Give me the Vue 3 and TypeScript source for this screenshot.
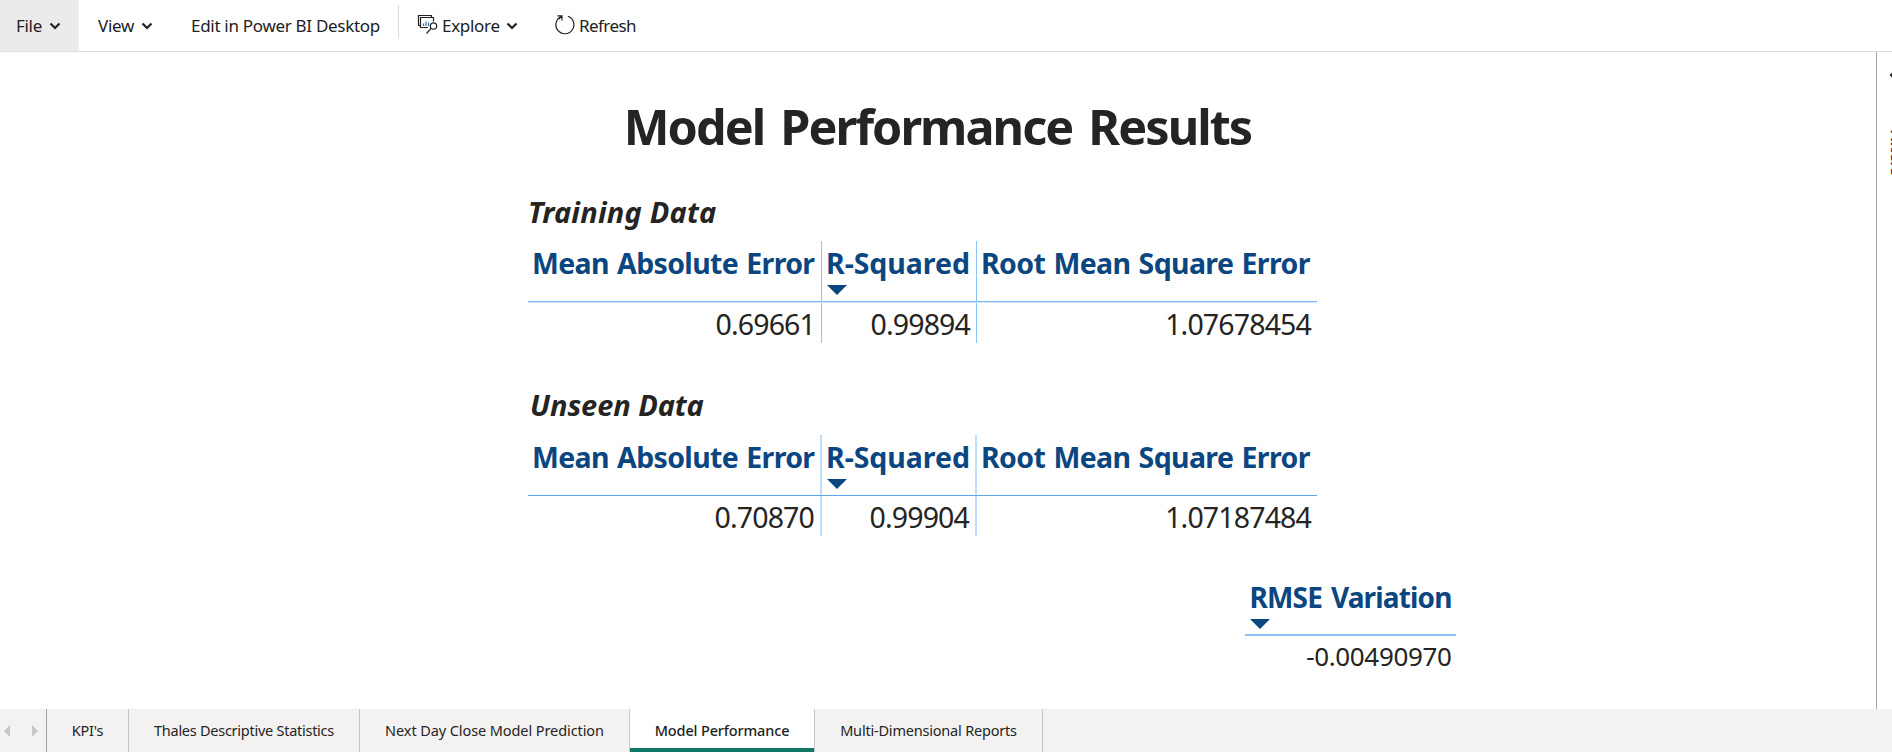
<script setup lang="ts">
interface MetricTable {
  id: string
  title: string
  mae: string
  r2: string
  rmse: string
}

const tables: MetricTable[] = [
  { id: 'training', title: 'Training Data', mae: '0.69661', r2: '0.99894', rmse: '1.07678454' },
  { id: 'unseen', title: 'Unseen Data', mae: '0.70870', r2: '0.99904', rmse: '1.07187484' },
]

const tabs = [
  { id: 'kpi', label: "KPI's", active: false },
  { id: 'thales', label: 'Thales Descriptive Statistics', active: false },
  { id: 'next', label: 'Next Day Close Model Prediction', active: false },
  { id: 'model', label: 'Model Performance', active: true },
  { id: 'multi', label: 'Multi-Dimensional Reports', active: false },
]
</script>

<template>
  <div class="page">
    <header class="toolbar">
      <button class="tool file">
        <span>File</span>
        <svg class="chev" viewBox="0 0 12 8"><path d="M1.5 1.5 6 6l4.5-4.5" /></svg>
      </button>
      <button class="tool view">
        <span>View</span>
        <svg class="chev" viewBox="0 0 12 8"><path d="M1.5 1.5 6 6l4.5-4.5" /></svg>
      </button>
      <button class="tool edit"><span>Edit in Power BI Desktop</span></button>
      <i class="divider"></i>
      <button class="tool explore">
        <svg class="icon" viewBox="0 0 20 20">
          <path d="M2.500 10.500h-2V.5h13v2" />
          <path d="M10 12.500H2.500v-10h13v4" />
          <path class="bars" d="M5.500 11V8.500M8 11V6.500M10.500 11V7.500" />
          <circle cx="15.500" cy="11" r="3.200" />
          <path d="M13.100 13.400 8.500 18.500" />
        </svg>
        <span>Explore</span>
        <svg class="chev" viewBox="0 0 12 8"><path d="M1.5 1.5 6 6l4.5-4.5" /></svg>
      </button>
      <button class="tool refresh">
        <svg class="icon" viewBox="0 0 20 20">
          <path d="M13 1.300A9 9 0 1 1 6.300 1.500" />
          <path d="M2.500.9h4.500v4.500M7 1 3.800 4.200" />
        </svg>
        <span>Refresh</span>
      </button>
    </header>

    <div class="body">
      <main class="canvas">
        <h1>Model Performance Results</h1>
        <section v-for="t in tables" :key="t.id" class="block" :class="t.id">
          <h2>{{ t.title }}</h2>
          <div class="grid">
            <div class="cell head c-mae"><span>Mean Absolute Error</span></div>
            <div class="cell head c-r2">
              <span>R-Squared</span>
              <svg class="sort" viewBox="0 0 20 10"><path d="M0 0h20L10 10z" /></svg>
            </div>
            <div class="cell head c-rmse"><span>Root Mean Square Error</span></div>
            <div class="rule"></div>
            <div class="cell val">{{ t.mae }}</div>
            <div class="cell val">{{ t.r2 }}</div>
            <div class="cell val">{{ t.rmse }}</div>
          </div>
        </section>
        <section class="variation">
          <div class="vhead">
            <span>RMSE Variation</span>
            <svg class="sort" viewBox="0 0 20 10"><path d="M0 0h20L10 10z" /></svg>
          </div>
          <div class="vval">-0.00490970</div>
        </section>
      </main>
      <aside class="pane">
        <svg class="pane-chev" viewBox="0 0 6 10"><path d="M5 1 1 5l4 4" /></svg>
        <span class="pane-label">Filters</span>
      </aside>
    </div>

    <nav class="tabs">
      <div class="arrows">
        <svg viewBox="0 0 6 12"><path d="M6 0v12L0 6z" /></svg>
        <svg viewBox="0 0 6 12"><path d="M0 0v12l6-6z" /></svg>
      </div>
      <div v-for="t in tabs" :key="t.id" class="tab" :class="[t.id, { active: t.active }]">
        <span>{{ t.label }}</span>
      </div>
    </nav>
  </div>
</template>

<style>
body {
  background: #fff;
  overflow: hidden;
}
</style>

<style scoped>
.page {
  width: 1892px;
  height: 752px;
  display: flex;
  flex-direction: column;
  overflow: hidden;
  font-family: 'Segoe UI', 'Noto Sans', sans-serif;
  color: #252423;
  background: #fff;
}
.toolbar {
  box-sizing: border-box;
  height: 52px;
  flex: none;
  display: flex;
  align-items: stretch;
  border-bottom: 1px solid #dcdcdc;
}
.tool {
  display: flex;
  align-items: center;
  box-sizing: border-box;
  border: 0;
  margin: 0;
  padding: 0;
  background: none;
  color: #212121;
  font: 400 17px/51px 'Segoe UI', 'Noto Sans', sans-serif;
  letter-spacing: -0.3px;
  white-space: nowrap;
}
.chev {
  width: 12px;
  height: 8px;
  fill: none;
  stroke: #212121;
  stroke-width: 2.2;
}
.file { width: 79px; padding-left: 16px; gap: 7px; background: #edebe9; }
.view { width: 112px; padding-left: 19px; gap: 7px; }
.edit { width: 207px; }
.divider {
  flex: none;
  width: 1px;
  height: 33px;
  margin-top: 5px;
  background: #d9d9d9;
}
.icon {
  width: 20px;
  height: 20px;
  fill: none;
  stroke: #212121;
  stroke-width: 1.2;
  overflow: visible;
  position: relative;
  top: -1px;
}
.icon .bars { stroke: #3b6ea5; }
.explore { width: 155px; padding-left: 19px; }
.explore .icon { margin-right: 4px; }
.explore .chev { margin-left: 6px; }
.refresh .icon { margin-right: 5px; left: 0.500px; }
.refresh { letter-spacing: -0.550px; }

.body {
  flex: 1;
  min-height: 0;
  display: flex;
}
.canvas {
  width: 1876px;
  flex: none;
  display: flex;
  flex-direction: column;
  align-items: flex-start;
}
h1 {
  width: 1875px;
  margin: 44px 0 0;
  text-align: center;
  font-size: 48.500px;
  line-height: 60px;
  font-weight: 700;
  letter-spacing: -1.950px;
  word-spacing: 5.500px;
}
.block { margin-left: 528px; width: 790px; }
.training { margin-top: 40px; }
.unseen { margin-top: 46px; }
h2 {
  margin: 0;
  font-size: 29px;
  font-style: italic;
  font-weight: 700;
  line-height: 32px;
}
.training h2 { letter-spacing: 0.190px; }
.unseen h2 { letter-spacing: -0.080px; padding-left: 2px; }
.grid {
  display: grid;
  grid-template-columns: 294px 155px 340px;
  grid-template-rows: 60px 2px 40px;
}
.training .grid { margin-top: 13px; }
.unseen .grid { margin-top: 14px; grid-template-rows: 60px 1px 40px; }
.cell {
  box-sizing: border-box;
  border-right: 1px solid #8ac4f8;
  white-space: nowrap;
}
.unseen .cell { border-right: 2px solid #c0dffc; }
.grid .cell:nth-child(3),
.grid .cell:last-child { border-right: 0; }
.head {
  padding-left: 4px;
  color: #0b4680;
  font-size: 28.500px;
  font-weight: 700;
  line-height: 44px;
}
.head span,
.vhead span { display: block; }
.c-mae { letter-spacing: -0.660px; word-spacing: 1.500px; }
.c-r2 { letter-spacing: -0.050px; }
.c-rmse { letter-spacing: -0.640px; word-spacing: 1.500px; }
.sort {
  display: block;
  width: 20px;
  height: 10px;
  fill: #0b4680;
}
.c-r2 .sort { margin-left: 1px; }
.unseen .c-r2 .sort { margin-left: 0.500px; }
.rule {
  grid-column: 1 / -1;
  background: linear-gradient(#7dbcf8 50%, #d3e8fc 50%);
}
.unseen .rule { background: #58a8ee; }
.val {
  padding-right: 6px;
  text-align: right;
  font-size: 28.500px;
  line-height: 43px;
  letter-spacing: -0.850px;
}
.variation { margin: 40px 0 0 1245px; width: 211px; }
.vhead {
  box-sizing: border-box;
  height: 60px;
  padding-left: 4.500px;
  border-bottom: 2px solid #8cc4fa;
  color: #0b4680;
  font-size: 28px;
  font-weight: 700;
  line-height: 43px;
  letter-spacing: -0.850px;
  word-spacing: 2.500px;
  white-space: nowrap;
}
.vval {
  padding-right: 4.500px;
  text-align: right;
  font-size: 26px;
  line-height: 40px;
  letter-spacing: -0.350px;
}
.pane {
  box-sizing: border-box;
  width: 16px;
  flex: none;
  border-left: 1px solid #a6a6a6;
  overflow: hidden;
}
.pane-chev {
  display: block;
  width: 6px;
  height: 10px;
  margin: 18px 0 0 12.500px;
  fill: none;
  stroke: #252423;
  stroke-width: 2;
}
.pane-label {
  display: block;
  margin: 49px 0 0 10px;
  width: 20px;
  writing-mode: vertical-rl;
  font-size: 16px;
  line-height: 20px;
  font-weight: 700;
  letter-spacing: -0.500px;
}

.tabs {
  height: 43px;
  flex: none;
  display: flex;
  background: #f3f2f1;
}
.arrows {
  box-sizing: border-box;
  width: 47px;
  display: flex;
  align-items: center;
  padding-left: 4px;
  gap: 22px;
  border-right: 1px solid #a19f9d;
}
.arrows svg { width: 6px; height: 12px; fill: #c8c6c4; }
.tab {
  box-sizing: border-box;
  display: flex;
  justify-content: center;
  border-right: 1px solid #c8c6c4;
  font-size: 14.500px;
  line-height: 43px;
  white-space: nowrap;
}
.kpi { width: 82px; letter-spacing: -0.150px; }
.thales { width: 231px; letter-spacing: -0.260px; }
.next { width: 270px; letter-spacing: -0.090px; }
.model { width: 185px; letter-spacing: -0.150px; }
.multi { width: 228px; letter-spacing: -0.200px; }
.tab.active {
  background: #fff;
  font-weight: 500;
  color: #201f1e;
  box-shadow: inset 0 -4px #117865;
}
</style>
